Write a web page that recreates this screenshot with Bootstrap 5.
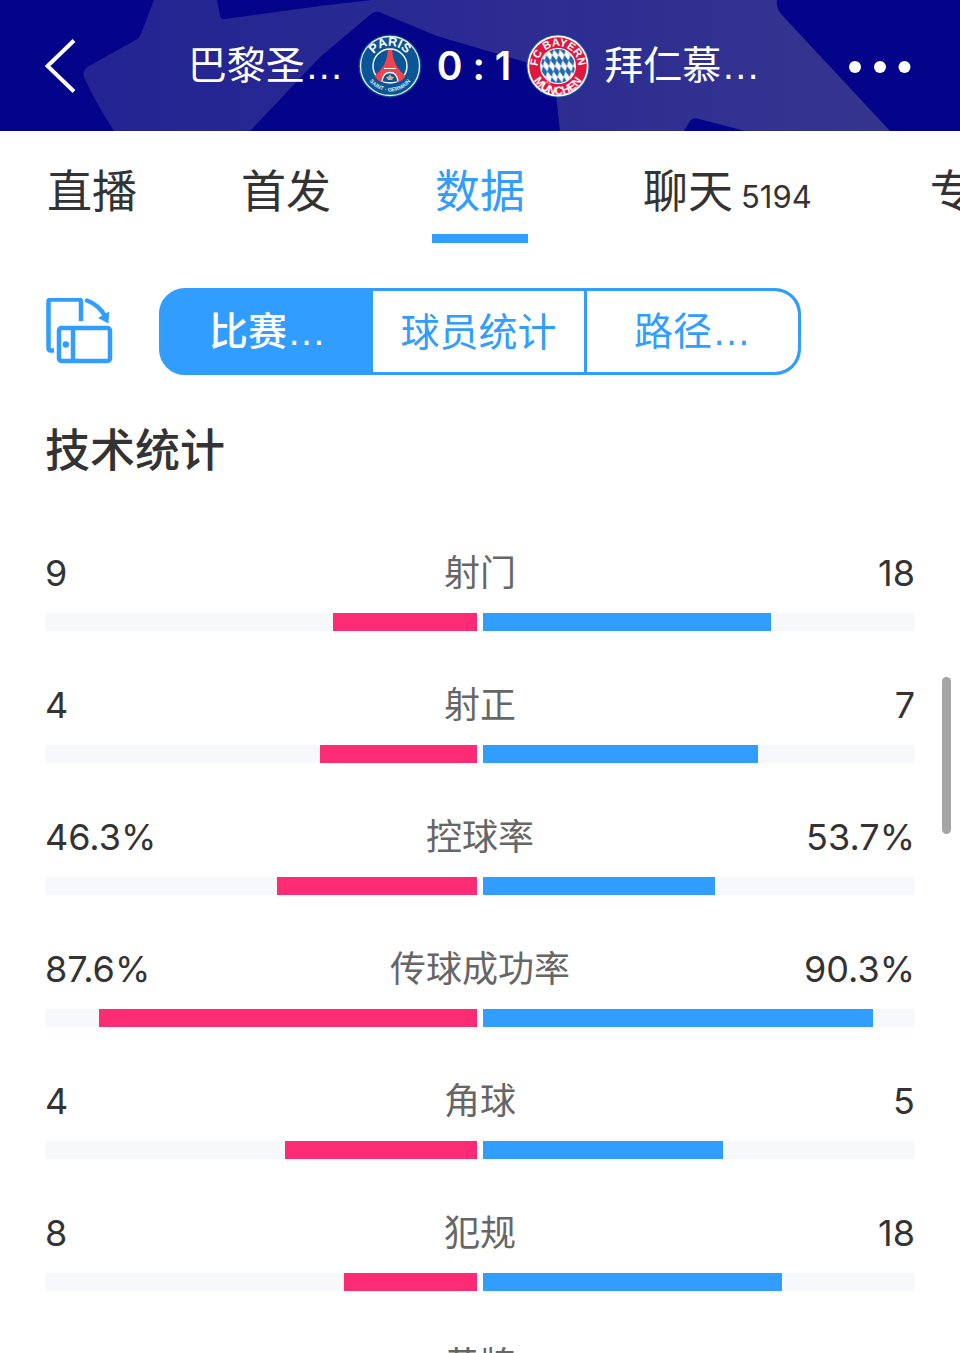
<!DOCTYPE html>
<html lang="zh-CN">
<head>
<meta charset="utf-8">
<meta name="viewport" content="width=device-width, initial-scale=1">
<title>技术统计</title>
<link href="https://cdn.jsdelivr.net/npm/bootstrap@5.3.0/dist/css/bootstrap.min.css" rel="stylesheet">
<style>
  :root { --accent: #319dfe; --home: #fd2b74; --ink: #333; --edge: 45px; }
  body { font-family: Inter, "Noto Sans CJK SC", sans-serif; font-feature-settings: "calt" 0; color: var(--ink); background: #fff; }
  .match-head { height: 131px; background: #04048a; color: #fff; padding: 0 49px 0 var(--edge); }
  .head-art { inset: 0; }
  .head-row { height: 131px; }
  .plain-btn { background: none; border: 0; padding: 0; color: inherit; line-height: 0; }
  .back-btn { width: 54px; text-align: left; }
  .team { font-size: 39px; line-height: 56px; }
  .dots { font-family: "Liberation Sans", sans-serif; }
  .score { font-size: 39px; line-height: 56px; font-weight: 600; margin: 0 15px; white-space: pre; }
  .crest { width: 64px; height: 64px; }
  .crest-home { margin-left: 14px; }
  .crest-away { margin-right: 14px; }
  .tabs { gap: 98px; padding-left: 44px; height: 112px; }
  .tabs a { min-width: 96px; height: 112px; line-height: 122px; font-size: 45px; color: var(--ink); text-align: center; flex-shrink: 0; }
  .tabs a.active { color: var(--accent); border-bottom: 9px solid var(--accent); }
  .tabs .chat-tab { padding: 0 17px; }
  .chat-tab span { font-size: 31px; margin-left: 8px; }
  .switch-row { padding: 45px var(--edge) 0; gap: 46px; }
  .segments { width: 642px; height: 87px; border: 3px solid var(--accent); border-radius: 26px; overflow: hidden; background: var(--accent); }
  .segments button { flex: 1 1 0; border: 0; background: #fff; color: var(--accent); font-size: 39px; line-height: 78px; padding: 0; }
  .segments button:last-child { border-left: 3px solid var(--accent); border-radius: 0 23px 23px 0; }
  .segments button.active { background: var(--accent); color: #fff; font-weight: 500; }
  .section-title { font-size: 45px; line-height: 64px; font-weight: 500; margin: 44px var(--edge) 60px; }
  .stats { padding: 0 var(--edge); }
  .stat { height: 132px; }
  .stat-text { font-size: 36px; line-height: 60px; margin-bottom: 10px; }
  .stat-text > * { flex: 1 1 0; }
  .stat-text .label { color: #666; }
  .bars { gap: 6px; }
  .bars .progress { flex: 1 1 0; height: 18px; border-radius: 0; background: #f6f8fb; }
  .bar-home { background: var(--home); }
  .bar-away { background: var(--accent); }
  .scroll-thumb { right: 9px; top: 50%; width: 9px; height: 157px; border-radius: 5px; background: #a5a5a5; }
</style>
</head>
<body>
<div class="vh-100 overflow-hidden position-relative">
  <header class="match-head position-relative">
    <svg class="head-art position-absolute w-100 h-100" viewBox="0 0 960 131" preserveAspectRatio="none" aria-hidden="true">
      <defs><linearGradient id="sheen" gradientUnits="userSpaceOnUse" x1="83" y1="0" x2="890" y2="0"><stop offset="0" stop-color="#232393"/><stop offset=".5" stop-color="#2b2b92"/><stop offset="1" stop-color="#35358f"/></linearGradient></defs>
      <path fill="url(#sheen)" d="M154 0 141 34Q139 39 134 41L89 66Q82 70 84 77Q97 105 114 131H250L320 57 371 14Q377 9 384 14L437 36 525 62 554 75 560 131H684L690 121Q693 117 699 119L745 131H890L781 14Q776 8 777 0H373L320 6 225 19Q221 20 220 16L217 0Z"/>
    </svg>
    <div class="head-row d-flex align-items-center position-relative">
      <button class="plain-btn back-btn" type="button" aria-label="返回">
        <svg width="31" height="54" viewBox="0 0 31 54" fill="none" stroke="#fff" stroke-width="4"><path d="M29 1.500 2.500 27 29 52.500"/></svg>
      </button>
      <div class="flex-grow-1 d-flex align-items-center justify-content-center text-nowrap">
        <span class="team">巴黎圣<span class="dots">…</span></span>
        <svg class="crest crest-home" viewBox="0 0 64 64" role="img" aria-label="巴黎圣日耳曼">
          <defs><path id="psgTop" d="M12 32a20 20 0 0 1 40 0"/><path id="psgLow" d="M6.500 32a25.500 25.500 0 0 0 51 0"/></defs>
          <circle cx="32" cy="32" r="31.500" fill="#0c4a8c"/><circle cx="32" cy="32" r="29.500" fill="#0a5596" stroke="#e8f2f8" stroke-width="1.300"/>
          <circle cx="32" cy="32" r="17" fill="#0a5596" stroke="#fff" stroke-width="1.400"/>
          <path fill="#f0434d" d="M30 16h4Q35 32 47.500 42Q44 47 40 48.500Q38 39 32 39T24 48.500Q20 47 16.500 42Q29 32 30 16Z"/>
          <path stroke="#fff" stroke-width="1" d="M26 34.500h12"/>
          <path fill="#0a5596" stroke="#fff" stroke-width="1.300" d="M24 47.500Q25 38.500 32 38.500T40 47.500"/>
          <path fill="#d6aa80" d="M32 40 33.500 42.500 36 43 34 46H30L28 43 30.500 42.500Z"/>
          <text font-family="Liberation Sans" font-size="12.500" font-weight="700" fill="#fff" text-anchor="middle"><textPath href="#psgTop" startOffset="50%">PARIS</textPath></text>
          <text font-family="Liberation Sans" font-size="5.500" font-weight="700" fill="#dbe9f2" text-anchor="middle"><textPath href="#psgLow" startOffset="50%">SAINT · GERMAIN</textPath></text>
        </svg>
        <span class="score">0 : 1</span>
        <svg class="crest crest-away" viewBox="0 0 64 64" role="img" aria-label="拜仁慕尼黑">
          <defs>
            <path id="fcbTop" d="M12.500 38a20.300 20.300 0 1 1 39 0"/><path id="fcbLow" d="M5 28a27.500 27.500 0 1 0 54 0"/>
            <pattern id="lozenge" width="6" height="11" patternUnits="userSpaceOnUse" patternTransform="translate(32 32) skewX(14)"><path fill="#2268b0" d="M3 0 6 5.500 3 11 0 5.500Z"/></pattern>
          </defs>
          <circle cx="32" cy="32" r="31.500" fill="#1c62ad"/><circle cx="32" cy="32" r="30.500" fill="#fff"/>
          <circle cx="32" cy="32" r="28.800" fill="#e2173f"/><circle cx="32" cy="32" r="18" fill="#fff"/>
          <circle cx="32" cy="32" r="17" fill="url(#lozenge)"/>
          <text font-family="Liberation Sans" font-size="11" font-weight="700" fill="#fff" text-anchor="middle"><textPath href="#fcbTop" startOffset="50%">FC BAYERN</textPath></text>
          <text font-family="Liberation Sans" font-size="11.500" font-weight="700" fill="#fff" text-anchor="middle"><textPath href="#fcbLow" startOffset="50%">MÜNCHEN</textPath></text>
        </svg>
        <span class="team">拜仁慕<span class="dots">…</span></span>
      </div>
      <button class="plain-btn" type="button" aria-label="更多">
        <svg width="62" height="14" viewBox="0 0 62 14" fill="#fff"><circle cx="6" cy="8" r="6"/><circle cx="31" cy="8" r="6"/><circle cx="55.500" cy="8" r="6"/></svg>
      </button>
    </div>
  </header>

  <nav class="tabs d-flex overflow-hidden text-nowrap">
    <a class="text-decoration-none" href="#">直播</a>
    <a class="text-decoration-none" href="#">首发</a>
    <a class="text-decoration-none active" href="#" aria-current="page">数据</a>
    <a class="text-decoration-none chat-tab" href="#">聊天<span>5194</span></a>
    <a class="text-decoration-none" href="#">专题</a>
  </nav>

  <div class="switch-row d-flex align-items-center">
    <button class="plain-btn" type="button" aria-label="横屏">
      <svg width="68" height="68" viewBox="0 2 68 68" fill="none" stroke="#319dfe" stroke-width="4.500">
        <path d="M36 25V6Q36 3.500 33.500 3.500H6Q3.500 3.500 3.500 6V52Q3.500 54.500 6 54.500H9"/>
        <rect x="14" y="32" width="51" height="33" rx="2.500"/><path d="M28 32V65"/>
        <circle cx="20.800" cy="48.500" r="3.200" fill="#319dfe" stroke="none"/>
        <path d="M42 4.500Q54 9 60 20" stroke-linecap="round"/><path fill="#319dfe" stroke="none" d="M53 22 64 15.500 63.500 27.500Z"/>
      </svg>
    </button>
    <div class="segments d-flex text-nowrap" role="group">
      <button class="active" type="button">比赛<span class="dots">…</span></button>
      <button type="button">球员统计</button>
      <button type="button">路径<span class="dots">…</span></button>
    </div>
  </div>

  <h1 class="section-title">技术统计</h1>

  <main class="stats">
    <section class="stat">
      <div class="stat-text d-flex"><span>9</span><span class="label text-center">射门</span><span class="text-end">18</span></div>
      <div class="bars d-flex"><div class="progress justify-content-end"><div class="bar-home" style="width:33.33%"></div></div><div class="progress"><div class="bar-away" style="width:66.67%"></div></div></div>
    </section>
    <section class="stat">
      <div class="stat-text d-flex"><span>4</span><span class="label text-center">射正</span><span class="text-end">7</span></div>
      <div class="bars d-flex"><div class="progress justify-content-end"><div class="bar-home" style="width:36.36%"></div></div><div class="progress"><div class="bar-away" style="width:63.64%"></div></div></div>
    </section>
    <section class="stat">
      <div class="stat-text d-flex"><span>46.3%</span><span class="label text-center">控球率</span><span class="text-end">53.7%</span></div>
      <div class="bars d-flex"><div class="progress justify-content-end"><div class="bar-home" style="width:46.3%"></div></div><div class="progress"><div class="bar-away" style="width:53.7%"></div></div></div>
    </section>
    <section class="stat">
      <div class="stat-text d-flex"><span>87.6%</span><span class="label text-center">传球成功率</span><span class="text-end">90.3%</span></div>
      <div class="bars d-flex"><div class="progress justify-content-end"><div class="bar-home" style="width:87.6%"></div></div><div class="progress"><div class="bar-away" style="width:90.3%"></div></div></div>
    </section>
    <section class="stat">
      <div class="stat-text d-flex"><span>4</span><span class="label text-center">角球</span><span class="text-end">5</span></div>
      <div class="bars d-flex"><div class="progress justify-content-end"><div class="bar-home" style="width:44.44%"></div></div><div class="progress"><div class="bar-away" style="width:55.56%"></div></div></div>
    </section>
    <section class="stat">
      <div class="stat-text d-flex"><span>8</span><span class="label text-center">犯规</span><span class="text-end">18</span></div>
      <div class="bars d-flex"><div class="progress justify-content-end"><div class="bar-home" style="width:30.77%"></div></div><div class="progress"><div class="bar-away" style="width:69.23%"></div></div></div>
    </section>
    <section class="stat">
      <div class="stat-text text-center"><span class="label">黄牌</span></div>
    </section>
  </main>
  <div class="scroll-thumb position-absolute" aria-hidden="true"></div>
</div>
<script src="https://cdn.jsdelivr.net/npm/bootstrap@5.3.0/dist/js/bootstrap.bundle.min.js"></script>
</body>
</html>
